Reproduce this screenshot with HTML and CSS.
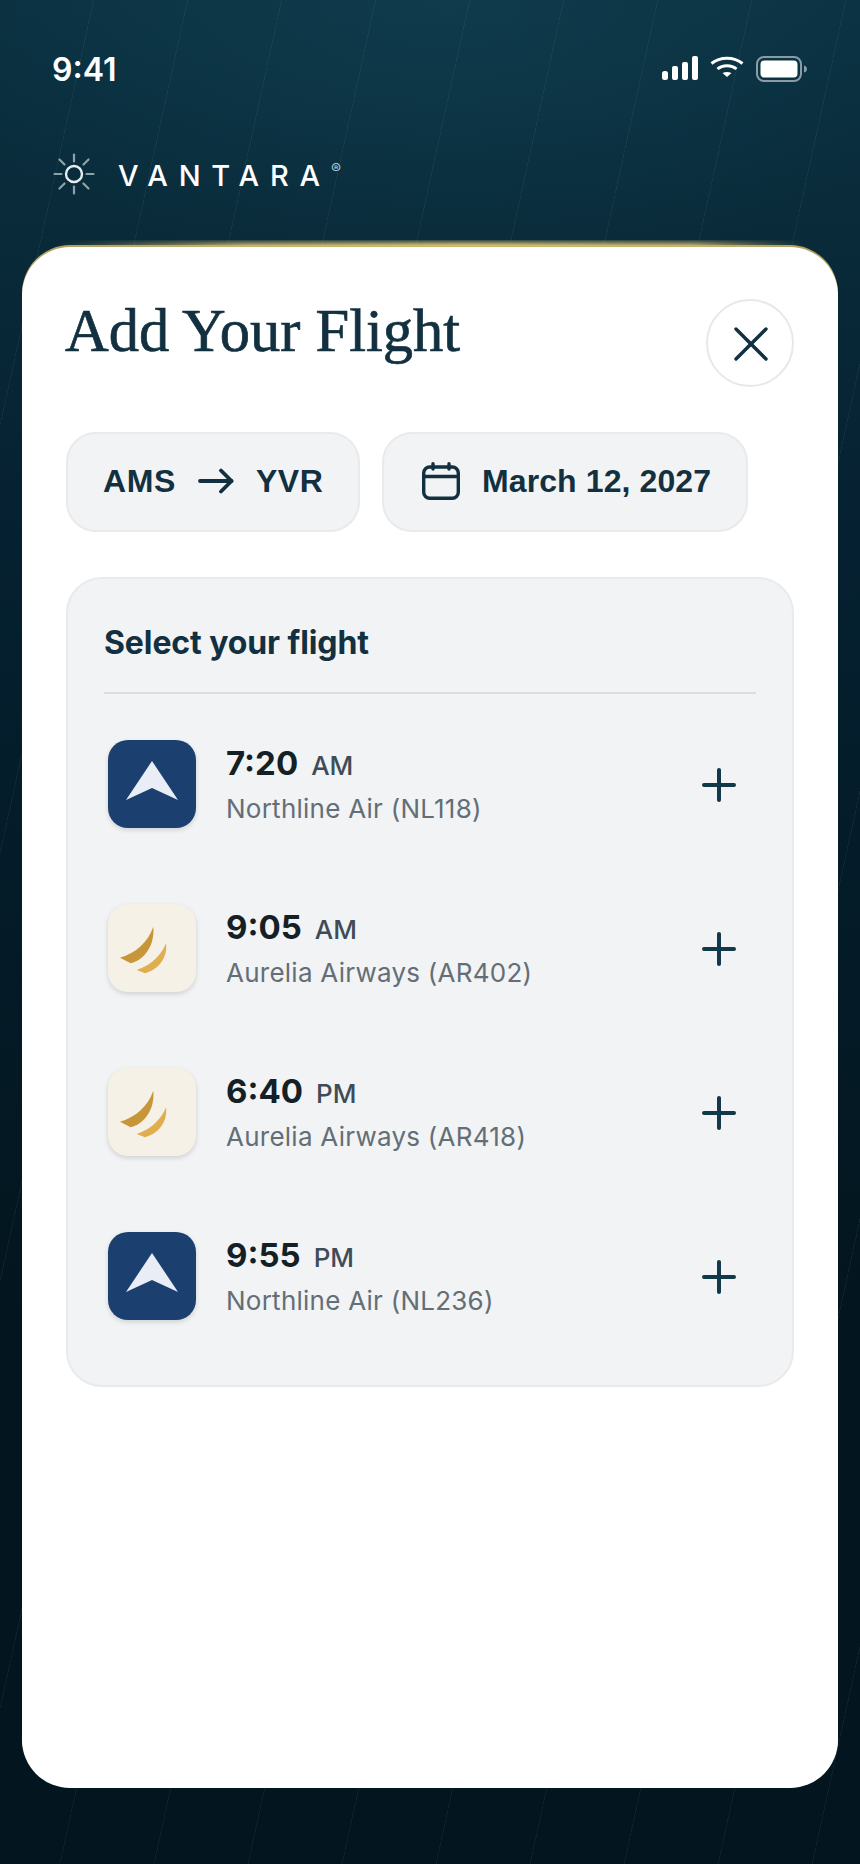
FILE: index.html
```html
<!DOCTYPE html>
<html lang="en">

<head>
    <meta charset="UTF-8">
    <meta name="viewport" content="width=device-width, initial-scale=1.0">
    <title>Add Your Flight</title>
    <link rel="stylesheet" href="styles.css">
</head>

<body>
    <div class="screen">
        <div class="status">
            <span class="clock">9:41</span>
            <div class="status-icons">
                <svg class="signal" width="36" height="25" viewBox="0 0 36 25">
                    <rect x="0" y="15" width="6" height="9" rx="2.5" fill="#fff" />
                    <rect x="10" y="10" width="6" height="14" rx="2" fill="#fff" />
                    <rect x="20" y="6" width="6" height="18" rx="2" fill="#fff" />
                    <rect x="30" y="0" width="6" height="24" rx="2" fill="#fff" />
                </svg>
                <svg class="wifi" width="34" height="22" viewBox="0 0 34 22" fill="none" stroke="#fff" stroke-width="3">
                    <path d="M1.5 7.5 C10 0.5 24 0.5 32.5 7.5" />
                    <path d="M7.5 13 C12.5 8.5 21.5 8.5 26.5 13" />
                    <path d="M12.5 17 L17 21 L21.5 17 C18.5 15.6 15.5 15.6 12.5 17 Z" fill="#fff" stroke="none" />
                </svg>
                <svg class="battery" width="51" height="26" viewBox="0 0 51 26">
                    <rect x="1" y="1" width="44" height="24" rx="7" fill="none" stroke="#8a9ca5" stroke-width="2" />
                    <rect x="4.5" y="4.5" width="37" height="17" rx="4" fill="#fff" />
                    <path d="M48 9.5 C50 10 51 11.5 51 13 C51 14.5 50 16 48 16.500 Z" fill="#8a9ca5" />
                </svg>
            </div>
        </div>

        <div class="brand">
            <svg class="sun" width="42" height="42" viewBox="0 0 42 42" fill="none" stroke-linecap="round">
                <circle cx="21" cy="21" r="8" stroke="#e6eef0" stroke-width="2.400" />
                <g stroke="#8da3ab" stroke-width="2.200">
                    <path d="M21 1.500 V8.500" />
                    <path d="M21 33.500 V40.500" />
                    <path d="M1.500 21 H8.500" />
                    <path d="M33.500 21 H40.500" />
                    <path d="M6.500 6.500 L11.500 11.500" />
                    <path d="M30.500 30.500 L35.500 35.500" />
                    <path d="M35.500 6.500 L30.500 11.500" />
                    <path d="M11.500 30.500 L6.500 35.500" />
                </g>
            </svg>
            <span class="brand-name">VANTARA</span>
            <span class="brand-reg">®</span>
        </div>

        <div class="sheet">
            <div class="sheet-head">
                <h1 class="title">Add Your Flight</h1>
                <button class="close" aria-label="Close">
                    <svg width="34" height="34" viewBox="0 0 34 34" fill="none" stroke="#12303f" stroke-width="3.400" stroke-linecap="round">
                        <path d="M2 2 L32 32" />
                        <path d="M32 2 L2 32" />
                    </svg>
                </button>
            </div>

            <div class="pills">
                <div class="pill pill-route">
                    <span>AMS</span>
                    <svg width="36" height="26" viewBox="0 0 36 26" fill="none" stroke="#12303f" stroke-width="3.800" stroke-linecap="round" stroke-linejoin="round">
                        <path d="M2 13 H33.500" />
                        <path d="M23 2.500 L33.500 13 L23 23.500" />
                    </svg>
                    <span>YVR</span>
                </div>
                <div class="pill pill-date">
                    <svg width="38" height="38" viewBox="0 0 38 38" fill="none" stroke="#12303f" stroke-width="3.400" stroke-linecap="round">
                        <rect x="1.700" y="5" width="34.600" height="31.300" rx="6" />
                        <path d="M1.700 14.500 H36.300" />
                        <path d="M11 1.700 V7" />
                        <path d="M27 1.700 V7" />
                    </svg>
                    <span>March 12, 2027</span>
                </div>
            </div>

            <div class="card">
                <div class="card-head">Select your flight</div>
                <div class="rows">
                    <div class="row">
                        <div class="logo logo-north">
                            <svg width="88" height="88" viewBox="0 0 88 88">
                                <path d="M44 21 L70 60 L44 48 L18 60 Z" fill="#e9eef6" />
                            </svg>
                        </div>
                        <div class="info">
                            <div class="time"><b>7:20</b><span>AM</span></div>
                            <div class="airline">Northline Air (NL118)</div>
                        </div>
                        <svg class="plus" width="36" height="36" viewBox="0 0 36 36" stroke="#12384a" stroke-width="4" stroke-linecap="round">
                            <path d="M18 3 V33" />
                            <path d="M3 18 H33" />
                        </svg>
                    </div>

                    <div class="row">
                        <div class="logo logo-aurelia">
                            <svg width="88" height="88" viewBox="0 0 88 88">
                                <path d="M45.300 22.700 C40 38 28 49 12 53.700 L22.700 59.300 C36 56 47 42 45.300 22.700 Z" fill="#c8963a" />
                                <path d="M58 39.300 C54 50 44 61 28.700 66 L37 69.300 C50 66 60 54 58 39.300 Z" fill="#e0ae50" />
                            </svg>
                        </div>
                        <div class="info">
                            <div class="time"><b>9:05</b><span>AM</span></div>
                            <div class="airline">Aurelia Airways (AR402)</div>
                        </div>
                        <svg class="plus" width="36" height="36" viewBox="0 0 36 36" stroke="#12384a" stroke-width="4" stroke-linecap="round">
                            <path d="M18 3 V33" />
                            <path d="M3 18 H33" />
                        </svg>
                    </div>

                    <div class="row">
                        <div class="logo logo-aurelia">
                            <svg width="88" height="88" viewBox="0 0 88 88">
                                <path d="M45.300 22.700 C40 38 28 49 12 53.700 L22.700 59.300 C36 56 47 42 45.300 22.700 Z" fill="#c8963a" />
                                <path d="M58 39.300 C54 50 44 61 28.700 66 L37 69.300 C50 66 60 54 58 39.300 Z" fill="#e0ae50" />
                            </svg>
                        </div>
                        <div class="info">
                            <div class="time"><b>6:40</b><span>PM</span></div>
                            <div class="airline">Aurelia Airways (AR418)</div>
                        </div>
                        <svg class="plus" width="36" height="36" viewBox="0 0 36 36" stroke="#12384a" stroke-width="4" stroke-linecap="round">
                            <path d="M18 3 V33" />
                            <path d="M3 18 H33" />
                        </svg>
                    </div>

                    <div class="row">
                        <div class="logo logo-north">
                            <svg width="88" height="88" viewBox="0 0 88 88">
                                <path d="M44 21 L70 60 L44 48 L18 60 Z" fill="#e9eef6" />
                            </svg>
                        </div>
                        <div class="info">
                            <div class="time"><b>9:55</b><span>PM</span></div>
                            <div class="airline">Northline Air (NL236)</div>
                        </div>
                        <svg class="plus" width="36" height="36" viewBox="0 0 36 36" stroke="#12384a" stroke-width="4" stroke-linecap="round">
                            <path d="M18 3 V33" />
                            <path d="M3 18 H33" />
                        </svg>
                    </div>
                </div>
            </div>
        </div>
    </div>
</body>

</html>
```

FILE: styles.css
```css
* {
    padding: 0;
    margin: 0;
    box-sizing: border-box;
}

body {
    width: 860px;
    height: 1864px;
    overflow: hidden;
    font-family: "Inter", sans-serif;
    background: #03151f;
}

.screen {
    height: 1864px;
    padding: 0 22px;
    background:
        repeating-linear-gradient(102.4deg, transparent 0, transparent 91px, rgba(255, 255, 255, 0.05) 91px, rgba(255, 255, 255, 0.05) 91.84px),
        radial-gradient(ellipse 560px 280px at 52% 0, rgba(20, 70, 88, 0.5), rgba(20, 70, 88, 0) 100%),
        linear-gradient(180deg, #0a3040 0%, #092a39 13%, #052030 30%, #03161f 70%, #03151f 100%);
}

/* status bar */
.status {
    height: 34px;
    box-sizing: content-box;
    padding: 52px 31px 0;
    display: flex;
    justify-content: space-between;
    align-items: center;
}

.clock {
    margin-left: -1px;
    color: #fff;
    font-size: 32px;
    font-weight: 600;
}

.status-icons {
    display: flex;
    align-items: flex-start;
    gap: 12px;
}

/* brand row */
.brand {
    display: flex;
    align-items: center;
    margin-top: 67px;
    padding-left: 31px;
    height: 42px;
}

.brand-name {
    margin-left: 23px;
    padding-top: 2px;
    color: #fff;
    font-size: 29px;
    font-weight: 500;
    letter-spacing: 10.8px;
}

.brand-reg {
    align-self: flex-start;
    margin-top: 6px;
    color: #b4c3c9;
    font-size: 15px;
}

/* white sheet */
.sheet {
    position: relative;
    height: 1541px;
    margin-top: 52px;
    padding: 52px 44px 0;
    background: #fff;
    border-radius: 48px;
    box-shadow: 0 -2px 0 #b3a05c;
}

/* gold rim along the top edge */
.sheet::before {
    content: "";
    position: absolute;
    top: -7px;
    left: 34px;
    right: 34px;
    height: 7px;
    background: linear-gradient(90deg, rgba(201, 182, 110, 0) 0%, rgba(201, 182, 110, 0.85) 25%, #cdb970 55%, rgba(201, 182, 110, 0.85) 85%, rgba(201, 182, 110, 0) 100%);
    -webkit-mask-image: linear-gradient(180deg, rgba(0, 0, 0, 0.2), #000 70%);
    mask-image: linear-gradient(180deg, rgba(0, 0, 0, 0.2), #000 70%);
}

.sheet-head {
    height: 88px;
    display: flex;
    justify-content: space-between;
}

.title {
    margin: -3px 0 0 -1px;
    color: #12303f;
    font-family: "Liberation Serif", serif;
    font-size: 60.5px;
    font-weight: 400;
    line-height: 70px;
    -webkit-text-stroke: 0.7px #12303f;
}

.close {
    width: 88px;
    height: 88px;
    display: flex;
    align-items: center;
    justify-content: center;
    padding: 2px 0 0 2px;
    background: #fff;
    border: 2px solid #e6e8ea;
    border-radius: 50%;
}

.pills {
    display: flex;
    gap: 22px;
    margin-top: 45px;
}

.pill {
    height: 100px;
    display: flex;
    align-items: center;
    padding-bottom: 2px;
    color: #12303f;
    font-family: "Liberation Sans", sans-serif;
    font-size: 32px;
    font-weight: 700;
    background: #f1f3f5;
    border: 2px solid #e8eaec;
    border-radius: 30px;
}

.pill-route {
    width: 294px;
    padding-left: 35px;
    gap: 22px;
    letter-spacing: 0.6px;
}

.pill-date {
    width: 366px;
    padding-left: 38px;
    gap: 22px;
    letter-spacing: 0.1px;
}

/* flight list */
.card {
    height: 810px;
    margin-top: 45px;
    padding: 0 36px;
    background: #f1f3f5;
    border: 2px solid #e8eaec;
    border-radius: 36px;
}

.card-head {
    height: 115px;
    padding-top: 44px;
    color: #12303f;
    font-size: 32px;
    font-weight: 700;
    letter-spacing: -0.1px;
    line-height: 40px;
    border-bottom: 2px solid #dcdfe2;
}

.rows {
    display: flex;
    flex-direction: column;
    gap: 76px;
    margin-top: 46px;
    padding-left: 4px;
}

.row {
    height: 88px;
    display: flex;
    align-items: center;
}

.logo {
    width: 88px;
    height: 88px;
    flex-shrink: 0;
    border-radius: 20px;
    box-shadow: 0 2px 5px rgba(0, 0, 0, 0.14);
}

.logo svg {
    display: block;
}

.logo-north {
    background: #1b3f6f;
}

.logo-aurelia {
    background: #f5f1e6;
}

.info {
    flex: 1;
    margin-left: 30px;
    padding-top: 1px;
}

.time {
    color: #141f26;
    line-height: 40px;
}

.time b {
    font-size: 33px;
    font-weight: 700;
}

.time span {
    margin-left: 13px;
    color: #3f4c55;
    font-size: 26px;
    font-weight: 500;
}

.airline {
    margin-top: 3px;
    color: #636e75;
    font-size: 26px;
    line-height: 34px;
    letter-spacing: 0.25px;
}

.plus {
    margin: 2px 19px 0 0;
}
```
